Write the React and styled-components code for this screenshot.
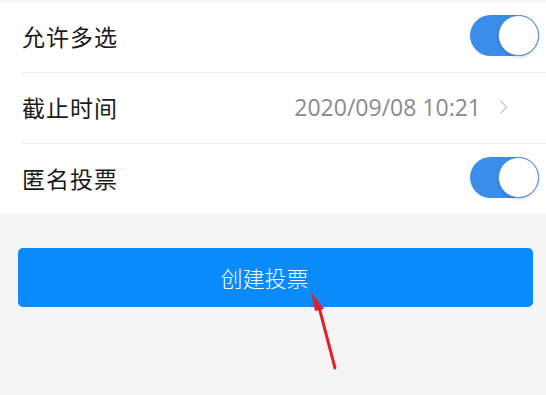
import React from "react";
import styled, { createGlobalStyle } from "styled-components";

const GlobalStyle = createGlobalStyle`
  html, body {
    margin: 0;
    padding: 0;
    background: #f5f5f5;
    font-family: "Noto Sans CJK SC", "Noto Sans", sans-serif;
  }
`;

const Page = styled.div`
  position: relative;
  width: 546px;
  height: 395px;
  overflow: hidden;
  background: #f5f5f5;
  padding-top: 2px;
  box-sizing: border-box;
`;

const Section = styled.div`
  background: #fff;
  padding-left: 22px;
`;

const Row = styled.div`
  display: flex;
  align-items: center;
  justify-content: space-between;
  height: 70px;
  padding-right: 7px;
  border-bottom: ${(p) => (p.last ? "none" : "1px solid #ececec")};
  box-sizing: content-box;
`;

const Label = styled.span`
  font-size: 23px;
  color: #1a1a1a;
  letter-spacing: 1px;
  margin-top: -3px;
`;

const Value = styled.div`
  display: flex;
  align-items: center;
  gap: 18px;
  font-family: "Open Sans", "Noto Sans", sans-serif;
  font-size: 23px;
  color: #8a8a8a;
  padding-right: 31px;
  margin-top: -3px;
`;

const Switch = styled.div`
  position: relative;
  width: 69px;
  height: 41px;
  border-radius: 21px;
  background: #3a8ee9;
  flex-shrink: 0;
  margin-top: -3px;
`;

const Knob = styled.div`
  position: absolute;
  top: 0;
  right: 0;
  width: 39px;
  height: 39px;
  border-radius: 50%;
  background: #fff;
  border: 1px solid #5a8fd6;
  box-shadow: 0 1px 3px rgba(0, 0, 0, 0.2);
`;

const Footer = styled.div`
  padding: 34px 13px 0 18px;
`;

const CreateButton = styled.button`
  width: 100%;
  height: 59px;
  border: none;
  border-radius: 5px;
  background: #0a8bfd;
  color: #fff;
  font-family: "Noto Sans CJK SC", sans-serif;
  font-weight: 300;
  font-size: 22px;
  letter-spacing: 0;
  display: flex;
  align-items: center;
  justify-content: center;
  padding: 0 22px 2px 0;
`;

const Arrow = styled.svg`
  position: absolute;
  left: 300px;
  top: 285px;
`;

const Chevron = () => (
  <svg width="9" height="16" viewBox="0 0 9 16">
    <path d="M1.5 1.5 L7.5 8 L1.5 14.5" fill="none" stroke="#c8c8c8" strokeWidth="1.3" />
  </svg>
);

const Toggle = () => (
  <Switch>
    <Knob />
  </Switch>
);

const App = () => {
  return (
    <Page>
      <GlobalStyle />
      <Section>
        <Row>
          <Label>允许多选</Label>
          <Toggle />
        </Row>
        <Row>
          <Label>截止时间</Label>
          <Value>
            2020/09/08 10:21
            <Chevron />
          </Value>
        </Row>
        <Row last>
          <Label>匿名投票</Label>
          <Toggle />
        </Row>
      </Section>
      <Footer>
        <CreateButton>创建投票</CreateButton>
      </Footer>
      <Arrow width="50" height="90" viewBox="0 0 50 90">
        <path d="M35 83 L19 22" stroke="#e0202a" strokeWidth="3" strokeLinecap="round" />
        <path d="M11 7 L24 24 L15 26 Z" fill="#e0202a" />
      </Arrow>
    </Page>
  );
};

export default App;
